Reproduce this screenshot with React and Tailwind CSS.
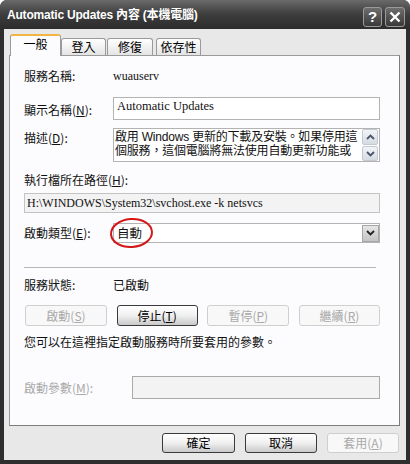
import React from "react";

const CJK = "font-['Noto_Sans_CJK_TC','Liberation_Sans',sans-serif]";
const SERIF = "font-['Liberation_Serif','Noto_Sans_CJK_TC',serif]";

function Chevron({ up = false, className = "" }) {
  return (
    <svg width="9" height="6" viewBox="0 0 9 6" className={className}>
      <path
        d={up ? "M1 5 L4.5 1.5 L8 5" : "M1 1 L4.5 4.5 L8 1"}
        fill="none"
        stroke="currentColor"
        strokeWidth="1.8"
      />
    </svg>
  );
}

function Btn({ children, disabled, className = "" }) {
  return (
    <div
      className={
        "flex items-center justify-center h-[20px] rounded-[3px] text-[12px] leading-none " +
        CJK +
        " " +
        (disabled
          ? "border border-[#cfcfcf] bg-[#f8f8f8] text-[#a9a9a9]"
          : "border border-[#3a3a3a] bg-gradient-to-b from-[#ffffff] via-[#f0f0f0] to-[#c9c9c9] text-black") +
        " " +
        className
      }
    >
      {children}
    </div>
  );
}

export default function App() {
  return (
    <div className="w-[410px] h-[464px] bg-white">
      <div className="w-[410px] h-[464px] rounded-t-[7px] bg-[#2e2e2e] flex flex-col overflow-hidden">
        {/* Title bar */}
        <div className="h-[29px] shrink-0 flex items-center pl-[7px] pr-[5px] bg-gradient-to-b from-[#6a6a6a] via-[#3d3d3d] to-[#2c2c2c]">
          <span className="flex-1 text-white font-bold text-[12px] tracking-[-0.2px] font-['Liberation_Sans','Noto_Sans_CJK_TC',sans-serif]">
            Automatic Updates 內容 (本機電腦)
          </span>
          <div className="flex gap-[3px] mt-[4px]">
            <div className="w-[19px] h-[20px] rounded-[3px] border border-[#9a9a9a] bg-gradient-to-b from-[#6e6e6e] to-[#3a3a3a] flex items-center justify-center text-white font-bold text-[15px] leading-none font-['Liberation_Sans',sans-serif]">
              ?
            </div>
            <div className="w-[20px] h-[20px] rounded-[3px] border border-[#9a9a9a] bg-gradient-to-b from-[#6e6e6e] to-[#3a3a3a] flex items-center justify-center">
              <svg width="12" height="12" viewBox="0 0 12 12">
                <path d="M1.5 1.5 L10.5 10.5 M10.5 1.5 L1.5 10.5" stroke="white" strokeWidth="2.4" />
              </svg>
            </div>
          </div>
        </div>

        {/* Body */}
        <div className="flex-1 mx-[4px] mb-[4px] bg-[#e8e8e8] flex flex-col pt-[5px]">
          {/* Tabs */}
          <div className={"flex items-end h-[21px] pl-[6px] " + CJK}>
            <div className="relative z-10 w-[51px] h-[22px] -mb-[1px] bg-[#fcfcfe] border border-b-0 border-[#9a9a9a] border-t-[2px] border-t-[#f2b543] rounded-t-[3px] flex justify-center pt-[1px] text-[12px] leading-[14px] text-black">
              一般
            </div>
            <div className="w-[45px] h-[17px] bg-gradient-to-b from-white to-[#e4e4e4] border border-b-0 border-[#9a9a9a] rounded-t-[3px] flex justify-center items-center text-[12px] leading-none text-black">
              登入
            </div>
            <div className="w-[46px] h-[17px] ml-[1px] bg-gradient-to-b from-white to-[#e4e4e4] border border-b-0 border-[#9a9a9a] rounded-t-[3px] flex justify-center items-center text-[12px] leading-none text-black">
              修復
            </div>
            <div className="w-[45px] h-[17px] ml-[3px] bg-gradient-to-b from-white to-[#e4e4e4] border border-b-0 border-[#9a9a9a] rounded-t-[3px] flex justify-center items-center text-[12px] leading-none text-black">
              依存性
            </div>
          </div>

          {/* Panel */}
          <div className={"relative ml-[5px] w-[391px] h-[371px] bg-[#fcfcfe] border border-[#9a9a9a] border-r-[#7d7d7d] border-b-[#7d7d7d] flex flex-col pl-[14px] pr-[19px] pt-[13px] text-[12px] text-[#111] " + CJK}>
            {/* Row 1 */}
            <div className="flex h-[14px] items-center leading-[14px]">
              <span className="w-[89px]">服務名稱:</span>
              <span className={"text-[12px] " + SERIF}>wuauserv</span>
            </div>
            {/* Row 2 */}
            <div className="flex items-center mt-[14px]">
              <span className="w-[89px] pt-[2px]">顯示名稱(<u>N</u>):</span>
              <div className={"flex-1 h-[23px] border border-[#b3b3b3] bg-white pl-[3px] pt-[1px] text-[12.5px] leading-[14px] " + SERIF}>
                Automatic Updates
              </div>
            </div>
            {/* Row 3 */}
            <div className="flex mt-[8px]">
              <span className="w-[89px] pt-[3px] leading-[14px]">描述(<u>D</u>):</span>
              <div className="flex-1 min-w-0 h-[34px] border border-[#b3b3b3] bg-white flex">
                <div className="flex-1 min-w-0 pl-[1px] pt-[1px] leading-[14px] overflow-hidden whitespace-nowrap text-[12px] tracking-[-0.2px] font-['Liberation_Sans','Noto_Sans_CJK_TC',sans-serif]">
                  <div>啟用 Windows 更新的下載及安裝。如果停用這</div>
                  <div>個服務，這個電腦將無法使用自動更新功能或</div>
                </div>
                <div className="w-[16px] shrink-0 flex flex-col gap-[1px] mr-[1px]">
                  <div className="h-[16px] rounded-[2px] border border-[#c3c9d3] bg-gradient-to-b from-[#f2f4f8] to-[#d6dbe3] flex items-center justify-center text-[#4a5566]">
                    <Chevron up />
                  </div>
                  <div className="h-[15px] rounded-[2px] border border-[#c3c9d3] bg-gradient-to-b from-[#f2f4f8] to-[#d6dbe3] flex items-center justify-center text-[#4a5566]">
                    <Chevron />
                  </div>
                </div>
              </div>
            </div>
            {/* Row 4 */}
            <div className="mt-[11px] h-[14px] leading-[14px]">執行檔所在路徑(<u>H</u>):</div>
            {/* Row 5 */}
            <div className={"mt-[6px] h-[20px] border border-[#c3c3c3] bg-[#f3f3f3] pl-[2px] leading-[18px] text-[12px] whitespace-nowrap " + SERIF}>
              H:\WINDOWS\System32\svchost.exe -k netsvcs
            </div>
            {/* Row 6 */}
            <div className="flex items-center mt-[10px] relative">
              <span className="w-[89px]">啟動類型(<u>E</u>):</span>
              <div className="flex-1 h-[20px] border border-[#b3b3b3] bg-white flex items-center">
                <span className="flex-1 pl-[3px] text-[12.5px] leading-none">自動</span>
                <div className="w-[17px] h-[17px] border border-[#a6a6a6] bg-gradient-to-b from-[#e6e6e6] to-[#c4c4c4] flex items-center justify-center text-[#222]">
                  <Chevron />
                </div>
              </div>
              <svg className="absolute left-[85px] top-[-6px]" width="46" height="33" viewBox="0 0 46 33">
                <ellipse cx="22.5" cy="16" rx="20.5" ry="14" fill="none" stroke="#d31616" strokeWidth="2" transform="rotate(-4 22.5 16)" />
              </svg>
            </div>
            {/* Separator */}
            <div className="mt-[24px] h-[1px] bg-[#b9b9b9] mr-[4px]" />
            {/* Row 8 */}
            <div className="flex mt-[10px] h-[14px] items-center leading-[14px]">
              <span className="w-[89px]">服務狀態:</span>
              <span>已啟動</span>
            </div>
            {/* Buttons */}
            <div className="flex justify-between mt-[13px] ml-[1px]">
              <Btn disabled className="w-[82px] h-[21px]">啟動(<u>S</u>)</Btn>
              <Btn className="w-[81px] h-[21px]">停止(<u>T</u>)</Btn>
              <Btn disabled className="w-[82px] h-[21px]">暫停(<u>P</u>)</Btn>
              <Btn disabled className="w-[81px] h-[21px]">繼續(<u>R</u>)</Btn>
            </div>
            {/* Hint */}
            <div className="mt-[9px] h-[14px] leading-[14px]">您可以在這裡指定啟動服務時所要套用的參數。</div>
            {/* Params */}
            <div className="flex items-center mt-[27px]">
              <span className="w-[108px] text-[#a9a9a9]">啟動參數(<u>M</u>):</span>
              <div className="flex-1 h-[23px] border border-[#a9a9a9] bg-[#f3f3f3]" />
            </div>
          </div>

          {/* Bottom buttons */}
          <div className="flex justify-end gap-[10px] pr-[7px] mt-[7px]">
            <Btn className="w-[73px] h-[20px]">確定</Btn>
            <Btn className="w-[72px] h-[20px]">取消</Btn>
            <Btn disabled className="w-[72px] h-[20px]">套用(<u>A</u>)</Btn>
          </div>
        </div>
      </div>
    </div>
  );
}
